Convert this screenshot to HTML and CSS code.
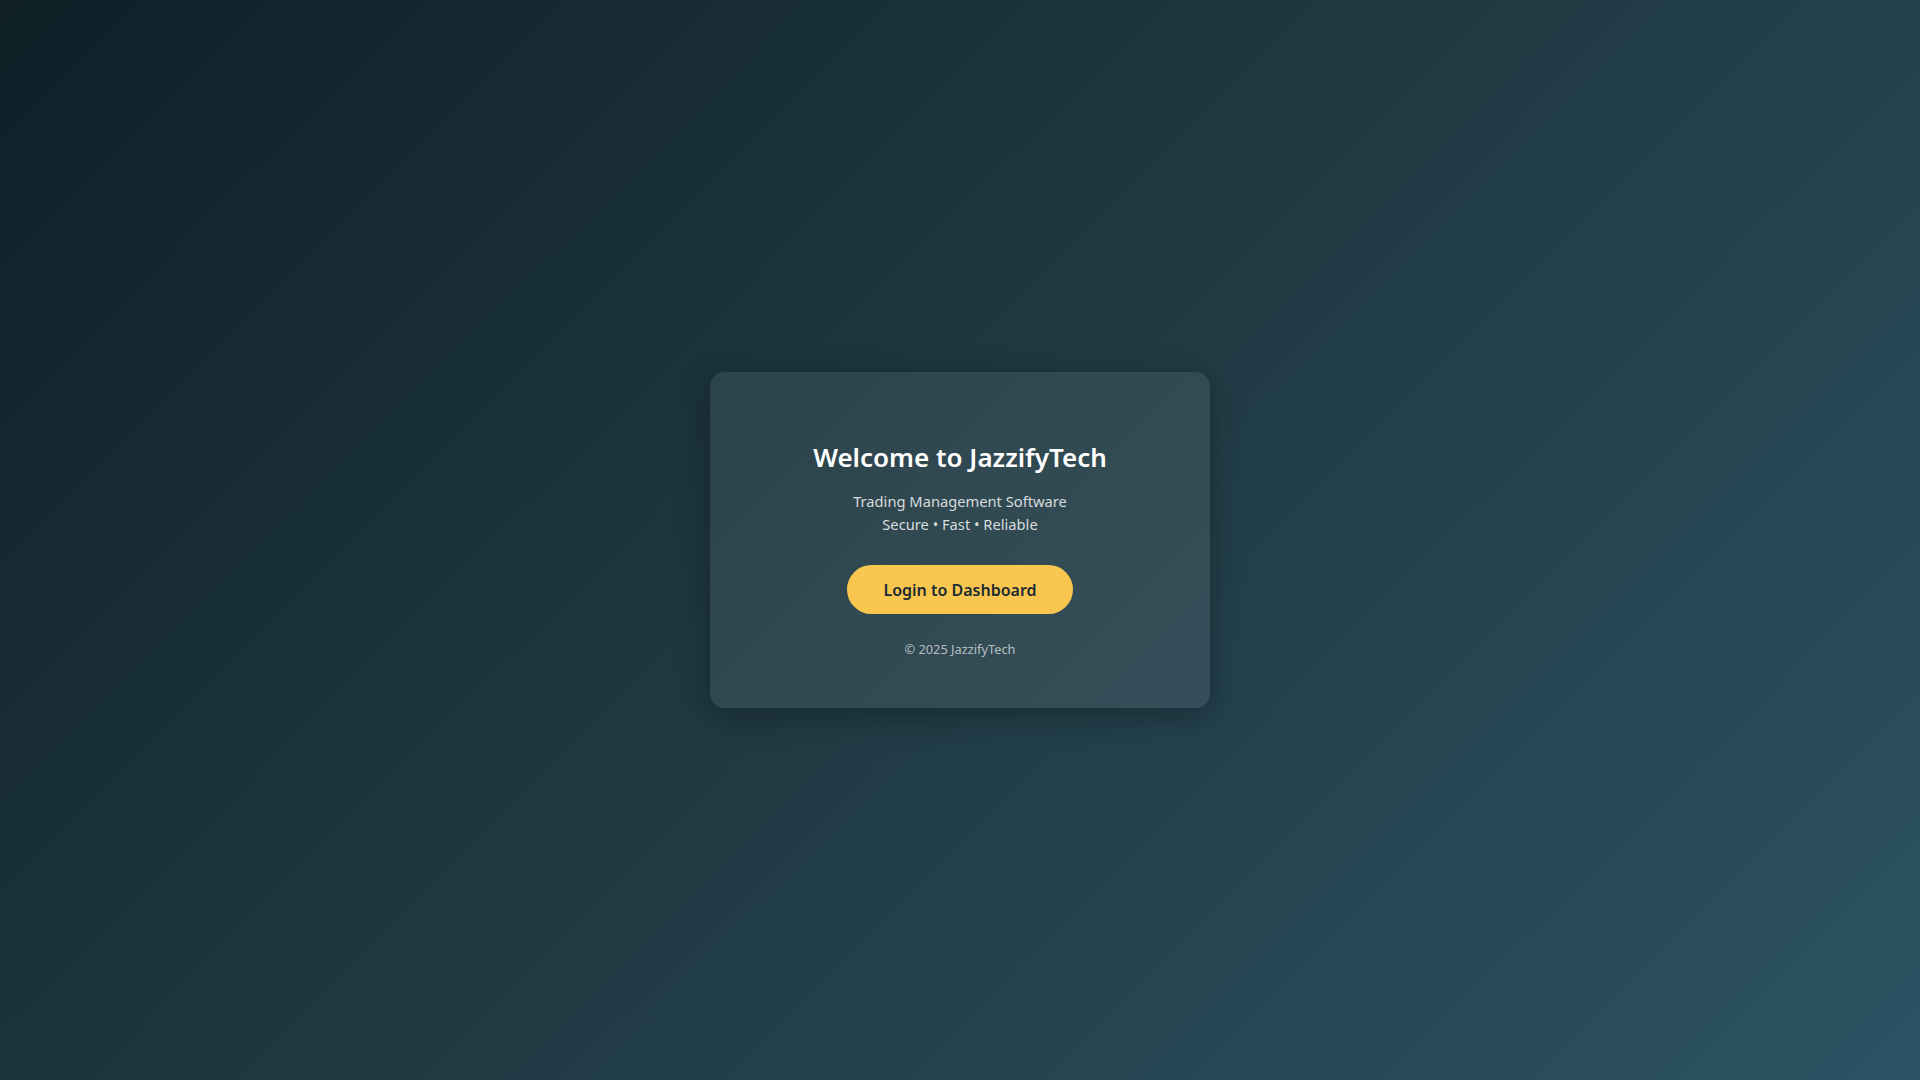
FILE: index.html
```html
<!DOCTYPE html>
<html lang="en">
<head>
<meta charset="utf-8">
<title>JazzifyTech</title>
<link rel="stylesheet" href="styles.css">
</head>
<body>
<main class="page">
  <section class="card">
    <h1 class="title">Welcome to JazzifyTech</h1>
    <p class="subtitle">Trading Management Software<br>Secure • Fast • Reliable</p>
    <button class="login-btn" type="button">Login to Dashboard</button>
    <p class="footer">© 2025 JazzifyTech</p>
  </section>
</main>
</body>
</html>
```

FILE: styles.css
```css
* { box-sizing: border-box; }
html, body { margin: 0; height: 100%; }
body {
  font-family: "Noto Sans", "Open Sans", sans-serif;
  background: linear-gradient(135deg, #0f2027 0%, #203a43 50%, #2c5364 100%);
  color: #fff;
}
.page {
  height: 100%;
  display: flex;
  align-items: center;
  justify-content: center;
}
.card {
  width: 500px;
  padding: 66px 40px 50px;
  border-radius: 14px;
  background: rgba(255, 255, 255, 0.08);
  box-shadow: 0 8px 32px rgba(0, 0, 0, 0.3);
  display: flex;
  flex-direction: column;
  align-items: center;
  text-align: center;
}
.title {
  margin: 0;
  font-size: 26px;
  line-height: 38px;
  font-weight: 600;
  color: #ffffff;
}
.subtitle {
  margin: 14px 0 0;
  font-size: 14.7px;
  line-height: 23px;
  color: rgba(255, 255, 255, 0.82);
}
.login-btn {
  margin-top: 29px;
  height: 49px;
  padding: 0 36px;
  border: none;
  border-radius: 999px;
  background: #f9c74f;
  color: #1b2a33;
  font-family: inherit;
  font-size: 16px;
  font-weight: 600;
  cursor: pointer;
}
.footer {
  margin: 26px 0 0;
  font-size: 12.8px;
  line-height: 18px;
  color: rgba(255, 255, 255, 0.65);
}
```
